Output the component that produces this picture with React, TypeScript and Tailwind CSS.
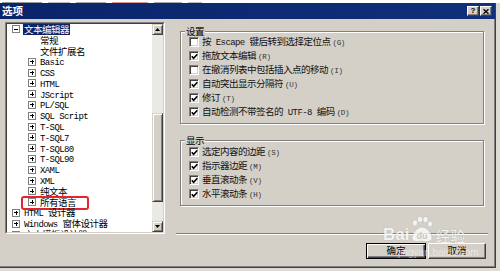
import React from "react";

const CJK_TEST = /[\u2E80-\u9FFF\uFF00-\uFFEF]/;
const CJK_SPLIT = /([\u2E80-\u9FFF\uFF00-\uFFEF]+)/;

function Mix({ text }: { text: string }) {
  const parts = text.split(CJK_SPLIT).filter((p) => p.length > 0);
  return (
    <>
      {parts.map((p, i) =>
        CJK_TEST.test(p) ? (
          <span key={i} className="font-['Noto_Sans_CJK_SC',sans-serif] text-[9.5px] tracking-[-0.5px]">
            {p}
          </span>
        ) : (
          <span key={i} className="font-['Liberation_Mono',monospace] text-[9px] tracking-[-0.6px] whitespace-pre">
            {p}
          </span>
        )
      )}
    </>
  );
}

type Row = { l: number; b: string; t: string; sel?: boolean; red?: boolean };

const tree: Row[] = [
  { l: 0, b: "-", t: "文本编辑器", sel: true },
  { l: 1, b: "", t: "常规" },
  { l: 1, b: "", t: "文件扩展名" },
  { l: 1, b: "+", t: "Basic" },
  { l: 1, b: "+", t: "CSS" },
  { l: 1, b: "+", t: "HTML" },
  { l: 1, b: "+", t: "JScript" },
  { l: 1, b: "+", t: "PL/SQL" },
  { l: 1, b: "+", t: "SQL Script" },
  { l: 1, b: "+", t: "T-SQL" },
  { l: 1, b: "+", t: "T-SQL7" },
  { l: 1, b: "+", t: "T-SQL80" },
  { l: 1, b: "+", t: "T-SQL90" },
  { l: 1, b: "+", t: "XAML" },
  { l: 1, b: "+", t: "XML" },
  { l: 1, b: "+", t: "纯文本" },
  { l: 1, b: "+", t: "所有语言", red: true },
  { l: 0, b: "+", t: "HTML 设计器" },
  { l: 0, b: "+", t: "Windows 窗体设计器" },
  { l: 0, b: "+", t: "文本模板设计器" },
];

function ExpandBox({ kind }: { kind: string }) {
  if (!kind) return <span className="w-[8px] h-[8px] shrink-0" />;
  return (
    <span className="relative w-[8px] h-[8px] shrink-0 border border-[#808080] bg-white">
      <span className="absolute left-[1px] top-[2.5px] w-[4px] h-[1px] bg-black" />
      {kind === "+" && <span className="absolute left-[2.5px] top-[1px] w-[1px] h-[4px] bg-black" />}
    </span>
  );
}

function ScrollBtn({ up }: { up: boolean }) {
  return (
    <div className="flex h-[11px] w-[11px] items-center justify-center border border-t-[#d4d0c8] border-l-[#d4d0c8] border-r-[#404040] border-b-[#404040] bg-[#d4d0c8] shadow-[inset_1px_1px_#fff,inset_-1px_-1px_#808080]">
      <svg width="5" height="3" viewBox="0 0 5 3">
        {up ? <path d="M2.5 0 L5 3 L0 3 Z" fill="#000" /> : <path d="M0 0 L5 0 L2.5 3 Z" fill="#000" />}
      </svg>
    </div>
  );
}

function Tree() {
  return (
    <div className="h-[212px] w-[160px] shrink-0 border border-t-[#808080] border-l-[#808080] border-r-white border-b-white">
      <div className="flex h-full w-full border border-t-[#404040] border-l-[#404040] border-r-[#d4d0c8] border-b-[#d4d0c8] bg-white">
        <div className="flex-1 overflow-hidden">
          {tree.map((r, i) => (
            <div key={i} className={`relative flex h-[10.8px] items-center ${r.l === 0 ? "pl-[5px]" : "pl-[21px]"}`}>
              <ExpandBox kind={r.b} />
              <span
                className={`ml-[3px] h-[11px] whitespace-nowrap px-[1px] font-['Noto_Sans_CJK_SC',sans-serif] text-[9.5px] leading-[11px] ${
                  r.sel ? "bg-[#0a246a] text-white" : "text-black"
                }`}
              >
                <Mix text={r.t} />
              </span>
              {r.red && (
                <span className="absolute left-[14px] top-[-1px] h-[14px] w-[68px] rounded-[3px] border-2 border-[#e3262c]" />
              )}
            </div>
          ))}
        </div>
        <div className="flex w-[11px] shrink-0 flex-col">
          <ScrollBtn up={true} />
          <div className="h-[78px] bg-[#ebe9e4]" />
          <div className="h-[89px] border border-t-[#d4d0c8] border-l-[#d4d0c8] border-r-[#404040] border-b-[#404040] bg-[#d4d0c8] shadow-[inset_1px_1px_#fff,inset_-1px_-1px_#808080]" />
          <div className="h-[19px] bg-[#ebe9e4]" />
          <ScrollBtn up={false} />
        </div>
      </div>
    </div>
  );
}

function Check({ on }: { on: boolean }) {
  return (
    <span className="relative h-[10px] w-[10px] shrink-0 border border-t-[#808080] border-l-[#808080] border-r-white border-b-white bg-white shadow-[inset_1px_1px_#404040,inset_-1px_-1px_#d4d0c8]">
      {on && (
        <svg className="absolute left-[1px] top-[1px]" width="7" height="7" viewBox="0 0 7 7">
          <path d="M0.8 3.2 L2.6 5.2 L6.3 1.2" stroke="#000" strokeWidth="1.6" fill="none" />
        </svg>
      )}
    </span>
  );
}

type Item = { on: boolean; t: string; a: string };

const g1: Item[] = [
  { on: false, t: "按 Escape 键后转到选择定位点", a: "(G)" },
  { on: true, t: "拖放文本编辑", a: "(R)" },
  { on: false, t: "在撤消列表中包括插入点的移动", a: "(I)" },
  { on: true, t: "自动突出显示分隔符", a: "(U)" },
  { on: true, t: "修订", a: "(T)" },
  { on: true, t: "自动检测不带签名的 UTF-8 编码", a: "(D)" },
];

const g2: Item[] = [
  { on: true, t: "选定内容的边距", a: "(S)" },
  { on: true, t: "指示器边距", a: "(M)" },
  { on: true, t: "垂直滚动条", a: "(V)" },
  { on: true, t: "水平滚动条", a: "(H)" },
];

function Group({ title, items, cls }: { title: string; items: Item[]; cls: string }) {
  return (
    <div className={`relative border border-[#808080] shadow-[1px_1px_0_#fff,inset_1px_1px_0_#fff] ${cls}`}>
      <span className="absolute left-[4px] top-[-7px] bg-[#d4d0c8] px-[1px] font-['Noto_Sans_CJK_SC',sans-serif] text-[9.5px] leading-[12px] tracking-[-0.5px] text-black">
        {title}
      </span>
      {items.map((it, i) => (
        <div key={i} className="flex h-[14px] items-center pl-[8px]">
          <Check on={it.on} />
          <span className="ml-[3px] whitespace-nowrap font-['Noto_Sans_CJK_SC',sans-serif] text-[9.5px] leading-[11px] text-[#111]">
            <Mix text={it.t} />
            <span className="ml-[2px] font-['Liberation_Mono',monospace] text-[7.5px] tracking-[-0.3px] text-[#333]">{it.a}</span>
          </span>
        </div>
      ))}
    </div>
  );
}

function TitleBar() {
  return (
    <div className="flex h-[16px] shrink-0 items-center justify-between bg-gradient-to-r from-[#0a246a] to-[#10307a] pl-[2px] pr-[3px]">
      <span className="font-['Noto_Sans_CJK_SC',sans-serif] text-[10.5px] font-bold leading-none text-white">选项</span>
      <div className="flex gap-[1px]">
        <div className="flex h-[10px] w-[12px] items-center justify-center border border-t-white border-l-white border-r-[#404040] border-b-[#404040] bg-[#d4d0c8] shadow-[inset_-1px_-1px_#808080]">
          <span className="font-['Liberation_Sans',sans-serif] text-[8px] font-bold leading-none text-black">?</span>
        </div>
        <div className="flex h-[10px] w-[12px] items-center justify-center border border-t-white border-l-white border-r-[#404040] border-b-[#404040] bg-[#d4d0c8] shadow-[inset_-1px_-1px_#808080]">
          <svg width="6" height="5" viewBox="0 0 6 5">
            <path d="M0.5 0.3 L5.5 4.7 M5.5 0.3 L0.5 4.7" stroke="#000" strokeWidth="1.4" />
          </svg>
        </div>
      </div>
    </div>
  );
}

function Watermark() {
  return (
    <>
      <div className="pointer-events-none absolute left-[383px] top-[216px] flex items-end opacity-75">
        <span className="font-['Liberation_Sans',sans-serif] text-[17px] font-bold leading-none text-white [text-shadow:0_0_1px_#999]">
          Bai
        </span>
        <svg width="24" height="27" viewBox="0 0 24 27" className="mx-[1px]">
          <ellipse cx="5" cy="7" rx="2.6" ry="3.2" fill="#fff" stroke="#aaa" strokeWidth="0.5" />
          <ellipse cx="10" cy="3.4" rx="2.6" ry="3.2" fill="#fff" stroke="#aaa" strokeWidth="0.5" />
          <ellipse cx="15.5" cy="3.6" rx="2.6" ry="3.2" fill="#fff" stroke="#aaa" strokeWidth="0.5" />
          <ellipse cx="20" cy="8" rx="2.4" ry="3" fill="#fff" stroke="#aaa" strokeWidth="0.5" />
          <path d="M12 11 C 7 11 2 18 2 22 C 2 26 7 26 12 25 C 17 26 22 26 22 22 C 22 18 17 11 12 11 Z" fill="#fff" stroke="#aaa" strokeWidth="0.5" />
          <text x="12" y="23" textAnchor="middle" fontSize="9" fontWeight="bold" fill="#c8c4bc" fontFamily="Liberation Sans, sans-serif">
            du
          </text>
        </svg>
        <span className="font-['Noto_Sans_CJK_SC',sans-serif] text-[15px] leading-none text-white [text-shadow:0_0_1px_#999]">
          经验
        </span>
      </div>
      <div className="pointer-events-none absolute left-[398px] top-[248px] font-['Liberation_Sans',sans-serif] text-[10px] leading-none text-white opacity-50">
        jingyan.baidu.com
      </div>
    </>
  );
}

export default function App() {
  return (
    <div className="relative h-[271px] w-[500px] overflow-hidden bg-[#dedbd5]">
      <div className="flex h-[3px] items-end gap-[6px] bg-white pl-[2px]">
        <div className="h-[1px] w-[40px] bg-[#999]" />
        <div className="h-[1px] w-[22px] bg-[#bbb]" />
        <div className="h-[1px] w-[30px] bg-[#aaa]" />
        <div className="h-[1px] w-[36px] bg-[#d99]" />
        <div className="h-[1px] w-[28px] bg-[#aaa]" />
        <div className="h-[1px] w-[14px] bg-[#bbb]" />
      </div>
      <div className="flex h-[265px] w-[496px] flex-col border-r border-b border-[#404040] bg-[#d4d0c8] shadow-[inset_-1px_-1px_#808080]">
        <TitleBar />
        <div className="flex pl-[5px] pt-[3px]">
          <Tree />
          <div className="ml-[15px] flex w-[304px] flex-col">
            <Group title="设置" items={g1} cls="mt-[9px] h-[93px] pt-[3px]" />
            <Group title="显示" items={g2} cls="mt-[16px] h-[66px] pt-[4px]" />
            <div className="ml-[-4px] mt-[27px] h-[2px] w-[312px] border-t border-b border-t-[#808080] border-b-white" />
            <div className="mr-[-2px] mt-[8px] flex justify-end gap-[2px]">
              <button className="flex h-[16px] w-[60px] items-center justify-center border border-black bg-[#d4d0c8] shadow-[inset_1px_1px_#fff,inset_-1px_-1px_#404040,inset_-2px_-2px_#808080] font-['Noto_Sans_CJK_SC',sans-serif] text-[9.5px] leading-none text-black">
                确定
              </button>
              <button className="flex h-[16px] w-[58px] items-center justify-center border border-t-white border-l-white border-r-[#404040] border-b-[#404040] bg-[#d4d0c8] shadow-[inset_-1px_-1px_#808080] font-['Noto_Sans_CJK_SC',sans-serif] text-[9.5px] leading-none text-black">
                取消
              </button>
            </div>
          </div>
        </div>
      </div>
      <Watermark />
    </div>
  );
}
